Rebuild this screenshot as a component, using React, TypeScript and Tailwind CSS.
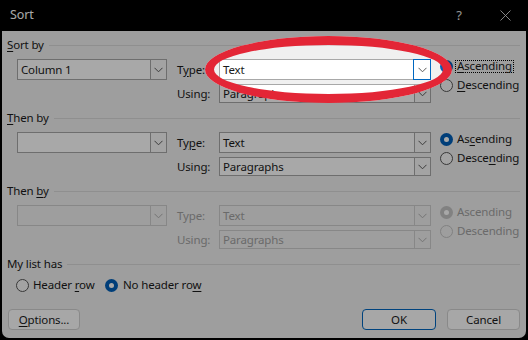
import React from "react";

function Chevron({ disabled }: { disabled?: boolean }) {
  return (
    <svg width="9" height="6" viewBox="0 0 9 6">
      <polyline
        points="0.5,0.8 4.5,4.8 8.5,0.8"
        fill="none"
        stroke={disabled ? "#b0b0b0" : "#5a5a5a"}
        strokeWidth="1"
      />
    </svg>
  );
}

function Combo({
  text,
  className,
  disabled,
  focused,
}: {
  text: string;
  className: string;
  disabled?: boolean;
  focused?: boolean;
}) {
  return (
    <div
      className={`flex border ${
        disabled ? "border-[#cdcdcd] bg-[#f0f0f0] text-[#a2a2a2]" : "border-[#a8a8a8] bg-white"
      } ${className}`}
    >
      <div className="flex-1 flex items-center pl-[3px] leading-none">{text}</div>
      <div
        className={`w-[16px] self-stretch flex items-center justify-center ${
          focused ? "ring-1 ring-[#0067c0] bg-white" : disabled ? "border-l border-[#cdcdcd]" : "border-l border-[#a8a8a8] bg-[#f7f7f7]"
        }`}
      >
        <Chevron disabled={disabled} />
      </div>
    </div>
  );
}

function RadioDot({ checked, disabled }: { checked?: boolean; disabled?: boolean }) {
  if (checked) {
    return (
      <div
        className={`w-[13px] h-[13px] rounded-full flex items-center justify-center shrink-0 ${
          disabled ? "bg-[#c4c4c4]" : "bg-[#005fb8]"
        }`}
      >
        <div className="w-[5px] h-[5px] rounded-full bg-white" />
      </div>
    );
  }
  return (
    <div
      className={`w-[13px] h-[13px] rounded-full border shrink-0 ${
        disabled ? "border-[#c4c4c4] bg-[#f0f0f0]" : "border-[#555555] bg-[#f8f8f8]"
      }`}
    />
  );
}

function GroupHeader({ children }: { children: React.ReactNode }) {
  return (
    <div className="flex items-center h-[16px]">
      <span className="leading-none">{children}</span>
      <div className="flex-1 h-px bg-[#dadada] ml-[5px] mr-[1px]" />
    </div>
  );
}

function U({ children }: { children: React.ReactNode }) {
  return <span className="underline underline-offset-2">{children}</span>;
}

function Group({
  title,
  first,
  typeLabel,
  asc,
  desc,
  disabled,
  typeFocused,
  ascFocus,
  mt,
}: {
  title: React.ReactNode;
  first: string;
  typeLabel: React.ReactNode;
  asc: React.ReactNode;
  desc: React.ReactNode;
  disabled?: boolean;
  typeFocused?: boolean;
  ascFocus?: boolean;
  mt: string;
}) {
  const lbl = disabled ? "text-[#a2a2a2]" : "";
  return (
    <div className={`flex flex-col ${mt}`}>
      <GroupHeader>{title}</GroupHeader>
      <div className="flex mt-[6px] pl-[10px]">
        <div className="flex flex-col gap-[4px]">
          <div className="flex items-center">
            <Combo text={first} className="w-[150px] h-[21px]" disabled={disabled} />
            <span className={`w-[42px] ml-[10px] leading-none ${lbl}`}>{typeLabel}</span>
            <Combo text="Text" className="w-[212px] h-[21px]" disabled={disabled} focused={typeFocused} />
          </div>
          <div className="flex items-center pl-[160px]">
            <span className={`w-[42px] leading-none ${lbl}`}>Using:</span>
            <Combo text="Paragraphs" className="w-[212px] h-[19px]" disabled={disabled} />
          </div>
        </div>
        <div className={`flex flex-col gap-[5px] ml-[9px] ${lbl}`}>
          <div className="flex items-center h-[14px]">
            <RadioDot checked disabled={disabled} />
            {ascFocus ? (
              <span className="ml-[2px] px-[1px] h-[13px] flex items-center border border-dotted border-black leading-none">
                {asc}
              </span>
            ) : (
              <span className="ml-[4px] leading-none">{asc}</span>
            )}
          </div>
          <div className="flex items-center h-[14px]">
            <RadioDot disabled={disabled} />
            <span className="ml-[4px] leading-none">{desc}</span>
          </div>
        </div>
      </div>
    </div>
  );
}

export default function App() {
  return (
    <div className="relative w-[528px] h-[340px] overflow-hidden bg-black flex flex-col font-['Noto_Sans',sans-serif] text-[11.5px] tracking-[-0.15px] text-[#1a1a1a]">
      <div className="h-[31px] shrink-0 flex items-center pl-[10px] text-white">
        <span className="text-[12.5px] leading-none">Sort</span>
        <div className="ml-auto flex items-center h-full">
          <span className="w-[46px] text-center text-[13px] leading-none text-[#e0e0e0]">?</span>
          <span className="w-[46px] flex justify-center">
            <svg width="11" height="11" viewBox="0 0 11 11">
              <path d="M0.5 0.5 L10.5 10.5 M10.5 0.5 L0.5 10.5" stroke="#e0e0e0" strokeWidth="0.9" />
            </svg>
          </span>
        </div>
      </div>
      <div className="flex-1 mx-[2px] mb-[2px] rounded-b-[7px] bg-[#f0f0f0] flex flex-col px-[5px] pt-[6px]">
        <Group
          mt="mt-0"
          title={<><U>S</U>ort by</>}
          first="Column 1"
          typeLabel={<>T<U>y</U>pe:</>}
          asc={<><U>A</U>scending</>}
          desc={<><U>D</U>escending</>}
          typeFocused
          ascFocus
        />
        <Group
          mt="mt-[7px]"
          title={<><U>T</U>hen by</>}
          first=""
          typeLabel={<>Ty<U>p</U>e:</>}
          asc={<>As<U>c</U>ending</>}
          desc={<>Desce<U>n</U>ding</>}
        />
        <Group
          mt="mt-[7px]"
          title={<>Then <U>b</U>y</>}
          first=""
          typeLabel="Type:"
          asc="Ascending"
          desc="Descending"
          disabled
        />
        <div className="mt-[7px]">
          <GroupHeader>My list has</GroupHeader>
        </div>
        <div className="flex items-center h-[14px] mt-[6px] pl-[9px]">
          <div className="flex items-center w-[89px]">
            <RadioDot />
            <span className="ml-[4px] leading-none">Header <U>r</U>ow</span>
          </div>
          <div className="flex items-center">
            <RadioDot checked />
            <span className="ml-[5px] leading-none">No header ro<U>w</U></span>
          </div>
        </div>
        <div className="flex items-center mt-[17px] pl-[1px] pr-[1px]">
          <button className="w-[72px] h-[21px] rounded-[4px] border border-[#d0d0d0] bg-[#fdfdfd] leading-none">
            <U>O</U>ptions...
          </button>
          <button className="ml-auto w-[74px] h-[21px] rounded-[4px] border border-[#0067c0] bg-[#fdfdfd] leading-none">
            OK
          </button>
          <button className="ml-[11px] w-[73px] h-[21px] rounded-[4px] border border-[#d0d0d0] bg-[#fdfdfd] leading-none">
            Cancel
          </button>
        </div>
      </div>
      <div className="absolute left-[205px] top-[36px] w-[247px] h-[67px] rounded-[50%] border-[9px] border-[#e32636] shadow-[0_0_0_800px_rgba(0,0,0,0.34)]" />
    </div>
  );
}
